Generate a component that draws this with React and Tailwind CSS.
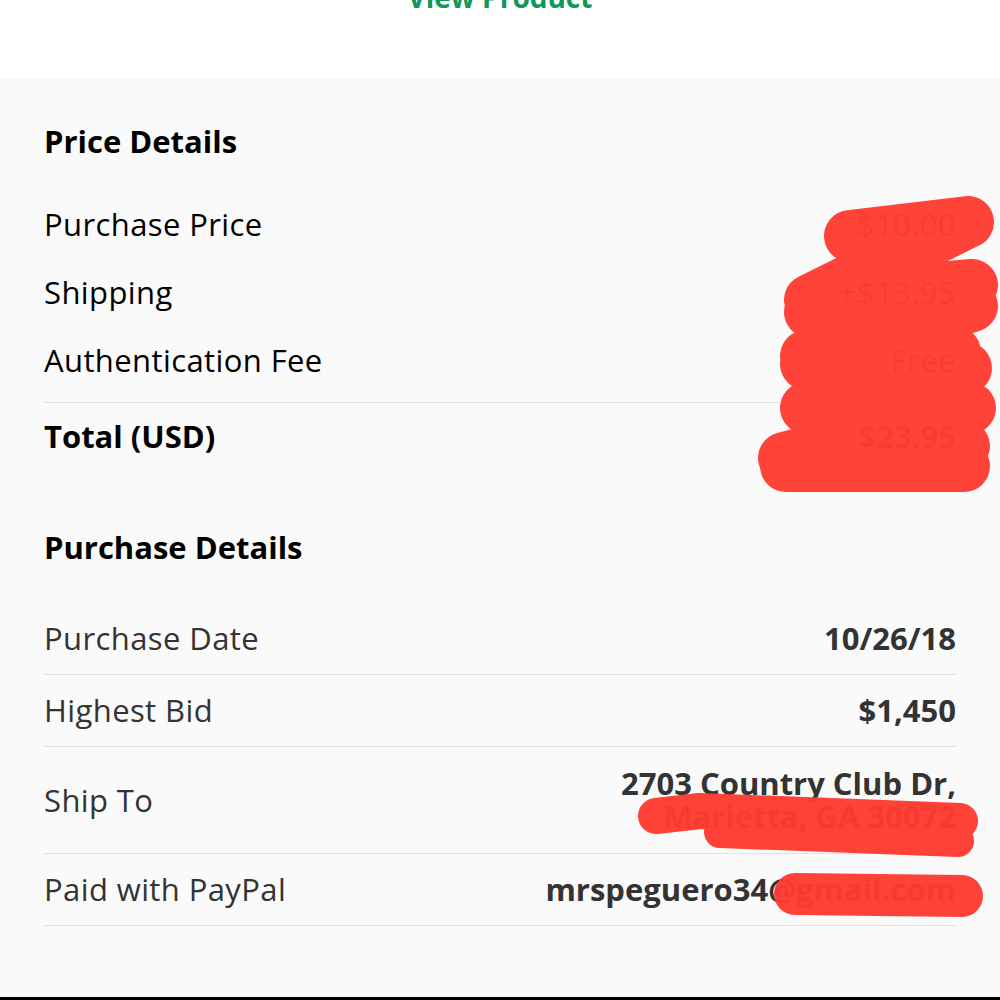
import { Fragment } from 'react';

const priceRows = [
  { label: 'Purchase Price', value: '$10.00' },
  { label: 'Shipping', value: '+$13.95' },
  { label: 'Authentication Fee', value: 'Free' },
];

function Scribbles() {
  return (
    <svg className="absolute inset-0 pointer-events-none" width="1000" height="1000" viewBox="0 0 1000 1000">
      <g opacity="0.96" fill="none" stroke="#ff3b30" strokeLinecap="round" strokeLinejoin="round">
        <path
          d="M850 236 L968 222 L810 300 L972 285 L810 312 L972 306 L806 356 L955 352 L806 364 L966 368 L806 408 L970 408 L784 458 L964 446 L786 466 L964 466"
          strokeWidth="52"
        />
        <path d="M656 816 L700 811 L960 821" strokeWidth="36" />
        <path d="M720 832 L958 841" strokeWidth="32" />
        <path d="M795 894 L962 896" strokeWidth="42" />
      </g>
    </svg>
  );
}

function App() {
  return (
    <div
      className="relative w-[1000px] h-[1000px] overflow-hidden bg-[#fafafa]"
      style={{ fontFamily: '"Open Sans", "Liberation Sans", sans-serif' }}
    >
      <div className="h-[78px] bg-white overflow-hidden flex justify-center">
        <span className="-mt-[21px] text-[28px] leading-[36px] font-bold text-[#10975c]">View Product</span>
      </div>

      <div className="h-[919px] px-[44px] pt-[45px]">
        <h2 className="text-[31px] leading-[36px] font-bold text-black">Price Details</h2>

        <div className="mt-[31px]">
          {priceRows.map((row) => (
            <div key={row.label} className="h-[68px] flex items-center justify-between text-[31px] tracking-[0.4px] text-black">
              <span>{row.label}</span>
              <span className="text-[#555]">{row.value}</span>
            </div>
          ))}
        </div>
        <div className="mt-2 border-t border-[#e2e2e2] h-[68px] flex items-center justify-between text-[31px] font-bold text-black">
          <span>Total (USD)</span>
          <span className="text-[#555]">$23.95</span>
        </div>

        <h2 className="mt-[59px] text-[31px] leading-[36px] font-bold text-black">Purchase Details</h2>

        <div className="mt-[38px] text-[31px] tracking-[0.4px] text-[#333]">
          <div className="h-[72px] flex items-center justify-between border-b border-[#e2e2e2]">
            <span>Purchase Date</span>
            <span className="font-bold tracking-normal">10/26/18</span>
          </div>
          <div className="h-[72px] flex items-center justify-between border-b border-[#e2e2e2]">
            <span>Highest Bid</span>
            <span className="font-bold tracking-normal">$1,450</span>
          </div>
          <div className="h-[107px] flex items-center justify-between border-b border-[#e2e2e2]">
            <span>Ship To</span>
            <span className="font-bold tracking-normal text-right leading-[33px] -mt-[1px]">
              2703 Country Club Dr,
              <br />
              Marietta, GA 30072
            </span>
          </div>
          <div className="h-[72px] flex items-center justify-between border-b border-[#e2e2e2]">
            <span>Paid with PayPal</span>
            <span className="font-bold tracking-normal">mrspeguero34@gmail.com</span>
          </div>
        </div>
      </div>

      <div className="h-[3px] bg-black" />
      <Scribbles />
    </div>
  );
}

export default App;
